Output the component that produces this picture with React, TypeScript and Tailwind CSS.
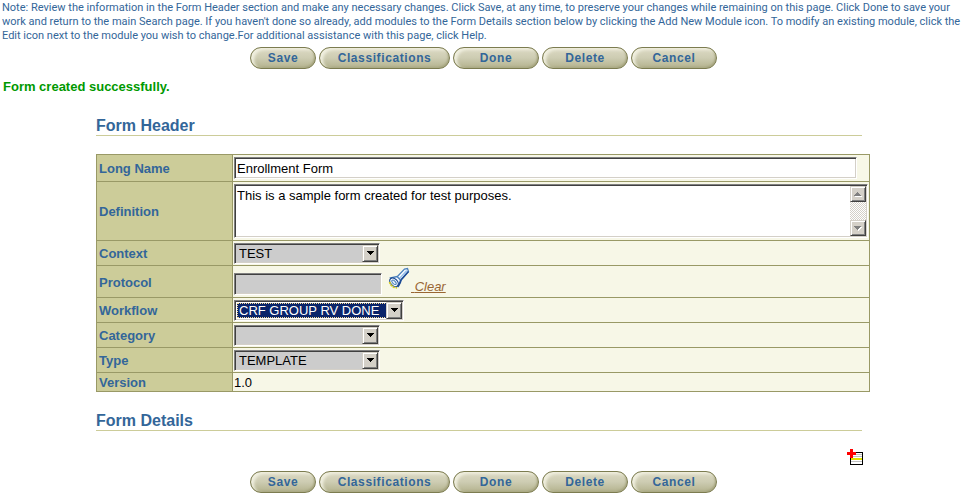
import React from "react";

const sunken =
  "border border-t-[#808080] border-l-[#808080] border-b-white border-r-white shadow-[inset_1px_1px_0_#404040,inset_-1px_-1px_0_#d4d0c8] outline-none rounded-none";
const raised =
  "flex items-center justify-center bg-[#d4d0c8] border border-t-[#d4d0c8] border-l-[#d4d0c8] border-b-[#404040] border-r-[#404040] shadow-[inset_1px_1px_0_#ffffff,inset_-1px_-1px_0_#808080]";

function PillButton({ label, width }: { label: string; width: string }) {
  return (
    <button
      type="button"
      className={`${width} h-[22px] rounded-full border border-[#7c7c50] bg-linear-to-b from-[#dcdac4] via-[#cdccb2] to-[#b4b38e] text-center text-xs font-bold tracking-wider text-[#336699] shadow-[inset_3px_2px_3px_#f0efdf,inset_-1px_-1px_2px_#a5a47e]`}
    >
      {label}
    </button>
  );
}

function ButtonBar() {
  return (
    <div className="flex justify-center gap-[3px] pl-1">
      <PillButton label="Save" width="w-[66px]" />
      <PillButton label="Classifications" width="w-[131px]" />
      <PillButton label="Done" width="w-[86px]" />
      <PillButton label="Delete" width="w-[86px]" />
      <PillButton label="Cancel" width="w-[86px]" />
    </div>
  );
}

function SectionTitle({ children }: { children: React.ReactNode }) {
  return (
    <h2 className="mr-[101px] ml-24 h-5 border-b border-[#cccc99] text-base leading-5 font-bold text-[#336699]">
      {children}
    </h2>
  );
}

function Dropdown({
  id,
  value,
  width,
  focused = false,
}: {
  id: string;
  value: string;
  width: string;
  focused?: boolean;
}) {
  return (
    <div className={`relative ${width} h-[21px] p-[2px] ${sunken} ${focused ? "bg-white" : "bg-[#cccccc]"}`}>
      <select
        id={id}
        defaultValue={value}
        className={`block h-[15px] w-full appearance-none rounded-none pl-[2px] text-[13px] leading-[15px] ${
          focused
            ? "bg-[#0a246a] text-white outline-1 -outline-offset-1 outline-dotted outline-[#f5db95]"
            : "bg-[#cccccc] text-black outline-none"
        }`}
      >
        <option value={value}>{value}</option>
      </select>
      <span className={`pointer-events-none absolute top-px right-px h-[17px] w-4 ${raised}`}>
        <svg width="7" height="4" viewBox="0 0 7 4" shapeRendering="crispEdges" aria-hidden="true">
          <path d="M0 0h7v1H0zM1 1h5v1H1zM2 2h3v1H2zM3 3h1v1H3z" />
        </svg>
      </span>
    </div>
  );
}

function Row({
  label,
  htmlFor,
  height,
  children,
}: {
  label: string;
  htmlFor?: string;
  height: string;
  children: React.ReactNode;
}) {
  return (
    <tr className={height}>
      <th
        scope="row"
        className="w-[136px] border border-[#999966] bg-[#cccc99] p-0 pt-[2px] pl-[2px] text-left align-middle text-[13px] leading-4 font-bold text-[#336699]"
      >
        {htmlFor ? <label htmlFor={htmlFor}>{label}</label> : label}
      </th>
      <td className="border border-[#999966] bg-[#f7f7e7] p-0 pl-px align-middle">{children}</td>
    </tr>
  );
}

function ScrollBar() {
  return (
    <div
      aria-hidden="true"
      className="absolute top-[2px] right-[2px] bottom-[2px] flex w-4 flex-col justify-between bg-[repeating-conic-gradient(#ffffff_0_25%,#d4d0c8_0_50%)] bg-size-[2px_2px]"
    >
      <span className={`h-4 ${raised}`}>
        <svg width="8" height="5" viewBox="0 0 8 5" shapeRendering="crispEdges">
          <path d="M1 4h7v1H1z" fill="#fff" />
          <path d="M3 0h1v1H3zM2 1h3v1H2zM1 2h5v1H1zM0 3h7v1H0z" fill="#808080" />
        </svg>
      </span>
      <span className={`h-4 ${raised}`}>
        <svg width="8" height="5" viewBox="0 0 8 5" shapeRendering="crispEdges">
          <path d="M1 1h7v1H1zM2 2h5v1H2zM3 3h3v1H3zM4 4h1v1H4z" fill="#fff" />
          <path d="M0 0h7v1H0zM1 1h5v1H1zM2 2h3v1H2zM3 3h1v1H3z" fill="#808080" />
        </svg>
      </span>
    </div>
  );
}

function Flashlight() {
  return (
    <svg width="22" height="23" viewBox="0 0 22 23" aria-hidden="true">
      <path d="M8.5 10.5 L16.5 2 L19.5 1.5 L20.5 4.5 L12.5 13.5 Z" fill="#ffffff" stroke="#4a80bc" strokeWidth="1.3" />
      <path d="M11.5 11.5 L18.8 3.6" fill="none" stroke="#9cc4ee" strokeWidth="1.6" />
      <path d="M12.5 13.5 L20.5 4.5" fill="none" stroke="#1d4a94" strokeWidth="1.5" />
      <path d="M2.5 11 L9 9.5 L13 13.5 L10 19.5 Z" fill="#f4f9ff" stroke="#4a80bc" strokeWidth="1.3" />
      <path d="M12.8 13 L12.2 15.5 L10 19.5" fill="none" stroke="#1d4a94" strokeWidth="1.8" />
      <ellipse cx="6" cy="15.3" rx="3.4" ry="5" transform="rotate(-45 6 15.3)" fill="#ffffff" stroke="#1d4a94" strokeWidth="1.3" />
      <ellipse cx="6" cy="15.3" rx="1.4" ry="2.8" transform="rotate(-45 6 15.3)" fill="#e4effa" stroke="#4a80bc" strokeWidth="1" />
      <path d="M1.5 15 L3 18 L5.5 20.2 L9 20.8" fill="none" stroke="#d8d020" strokeWidth="1.8" strokeDasharray="2 1" />
    </svg>
  );
}

function AddModule() {
  return (
    <svg width="16" height="17" viewBox="0 0 16 17" shapeRendering="crispEdges" aria-hidden="true">
      <path d="M3 3h13v13H3z" fill="#000" />
      <path d="M4 4h11v11H4z" fill="#fff" />
      <path d="M4 5h11v1H4zM4 7h11v1H4zM4 12h11v1H4z" fill="#c0c0c0" />
      <path d="M4 9h11v2H4z" fill="#e2e200" />
      <path d="M3 0h3v3h3v3H6v3H3V6H0V3h3z" fill="#ff0000" />
    </svg>
  );
}

export default function App() {
  return (
    <main className="min-h-screen bg-white font-['Liberation_Sans',Arial,sans-serif] text-black">
      <p className="px-[2px] pt-px pb-1 font-[Roboto,Arial,sans-serif] text-[11px] leading-[14px] text-[#336699]">
        Note: Review the information in the Form Header section and make any necessary changes. Click Save, at any
        time, to preserve your changes while remaining on this page. Click Done to save your work and return to the
        main Search page. If you haven't done so already, add modules to the Form Details section below by clicking
        the Add New Module icon. To modify an existing module, click the Edit icon next to the module you wish to
        change.For additional assistance with this page, click Help.
      </p>
      <ButtonBar />
      <p className="mt-[10px] pl-[3px] text-[13px] leading-4 font-bold text-[#009900]">Form created successfully.</p>

      <div className="mt-[21px]">
        <SectionTitle>Form Header</SectionTitle>
      </div>
      <div className="mt-[18px] mr-[93px] ml-24">
        <table className="w-full table-fixed border-collapse">
          <tbody>
            <Row label="Long Name" htmlFor="longName" height="h-[27px]">
              <input
                id="longName"
                type="text"
                defaultValue="Enrollment Form"
                className={`mr-3 block h-[22px] w-[calc(100%-12px)] bg-white px-[2px] text-[13px] ${sunken}`}
              />
            </Row>
            <Row label="Definition" htmlFor="definition" height="h-[59px]">
              <div className="relative mr-px">
                <textarea
                  id="definition"
                  defaultValue="This is a sample form created for test purposes."
                  className={`block h-[54px] w-full resize-none overflow-hidden bg-white py-[3px] pr-5 pl-[2px] text-[13px] leading-4 ${sunken}`}
                />
                <ScrollBar />
              </div>
            </Row>
            <Row label="Context" htmlFor="context" height="h-[25px]">
              <Dropdown id="context" value="TEST" width="w-[146px]" />
            </Row>
            <Row label="Protocol" htmlFor="protocol" height="h-8">
              <div className="flex h-[31px] items-start">
                <input
                  id="protocol"
                  type="text"
                  readOnly
                  className={`mt-[7px] h-[22px] w-[148px] bg-[#cccccc] px-[2px] text-[13px] ${sunken}`}
                />
                <span className="mt-px ml-[6px]">
                  <Flashlight />
                </span>
                <a
                  href="#clear"
                  className="mt-[13px] ml-px text-[13px] leading-4 whitespace-pre text-[#996633] italic underline"
                >
                  {" "}
                  Clear
                </a>
              </div>
            </Row>
            <Row label="Workflow" htmlFor="workflow" height="h-[25px]">
              <Dropdown id="workflow" value="CRF GROUP RV DONE" width="w-[170px]" focused />
            </Row>
            <Row label="Category" htmlFor="category" height="h-[25px]">
              <Dropdown id="category" value="" width="w-[146px]" />
            </Row>
            <Row label="Type" htmlFor="type" height="h-[25px]">
              <Dropdown id="type" value="TEMPLATE" width="w-[146px]" />
            </Row>
            <Row label="Version" height="h-[19px]">
              <span className="block pt-[2px] text-[13px] leading-4">1.0</span>
            </Row>
          </tbody>
        </table>
      </div>

      <div className="mt-[19px]">
        <SectionTitle>Form Details</SectionTitle>
      </div>
      <div className="mt-[18px] mr-[100px] flex justify-end">
        <button type="button" aria-label="Add New Module" className="block">
          <AddModule />
        </button>
      </div>
      <div className="mt-[5px]">
        <ButtonBar />
      </div>
    </main>
  );
}
